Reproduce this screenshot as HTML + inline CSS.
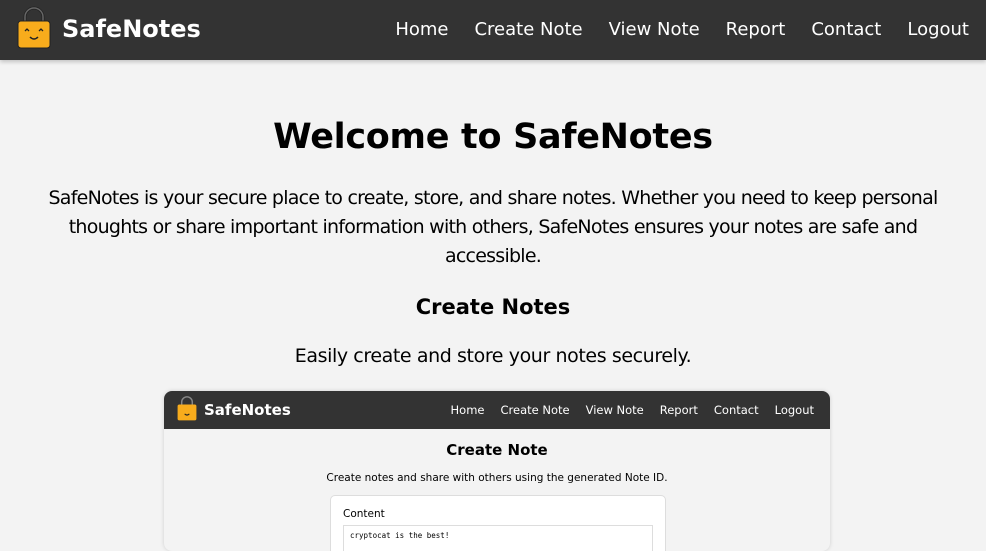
<!DOCTYPE html>
<html><head><meta charset="utf-8"><style>
*{margin:0;padding:0;box-sizing:border-box}
body{width:986px;height:538px;overflow:hidden;background:#f3f3f3;font-family:"DejaVu Sans","Liberation Sans",sans-serif;color:#000}
.nav{height:60px;background:#333;display:flex;align-items:center;position:relative;box-shadow:0 2px 4px rgba(0,0,0,.2)}
.logo{position:absolute;left:17px;top:5px}
.brand{position:absolute;left:62px;top:15px;color:#fff;font-weight:bold;font-size:24px}
.links{position:absolute;right:17px;top:19px;color:#fff;font-size:18px;display:flex;gap:26px}
h1{text-align:center;font-size:35px;font-weight:bold;margin-top:57px;letter-spacing:-0.3px}
p.lead{text-align:center;font-size:19px;line-height:29px;margin:27px 20px 0;letter-spacing:-0.75px}
h2{text-align:center;font-size:21px;font-weight:bold;margin-top:24px}
p.sub{text-align:center;font-size:19px;margin-top:26px;letter-spacing:-0.4px}
.shot{position:absolute;left:164px;top:391px;width:666px;height:160px;background:#f3f3f3;border-radius:8px;overflow:hidden;box-shadow:0 0 4px rgba(0,0,0,.15)}
.snav{height:38px;background:#333;position:relative}
.sbrand{position:absolute;left:40px;top:10px;color:#fff;font-weight:bold;font-size:15px}
.slinks{position:absolute;right:16px;top:12px;color:#fff;font-size:11.5px;display:flex;gap:16px}
.st{text-align:center;font-weight:bold;font-size:15px;margin-top:12px}
.ss{text-align:center;font-size:10.5px;margin-top:13px}
.card{position:absolute;left:166px;top:104px;width:336px;height:80px;background:#fff;border:1px solid #ddd;border-radius:5px}
.card .l{font-size:10.5px;position:absolute;left:12px;top:12px}
.card .i{position:absolute;left:12px;top:29px;width:310px;height:30px;border:1px solid #ddd;font-family:"DejaVu Sans Mono",monospace;font-size:7.5px;padding:5px 6px}
</style></head><body>
<div class="nav">
<svg class="logo" width="34" height="44" viewBox="0 0 34 44"><path d="M8 20V12a9 9 0 0 1 18 0v8" fill="none" stroke="#222" stroke-width="3"/><path d="M8 20V12a9 9 0 0 1 18 0v8" fill="none" stroke="#666" stroke-width="1.5"/><rect x="1" y="16" width="32" height="27" rx="3" fill="#f8ac1c" stroke="#222" stroke-width="1"/><path d="M8 26l2-2 2 2M22 26l2-2 2 2" fill="none" stroke="#222" stroke-width="1.3"/><path d="M13 32q4 4 8 0" fill="none" stroke="#222" stroke-width="1.5"/></svg>
<div class="brand">SafeNotes</div>
<div class="links"><span>Home</span><span>Create Note</span><span>View Note</span><span>Report</span><span>Contact</span><span>Logout</span></div>
</div>
<h1>Welcome to SafeNotes</h1>
<p class="lead">SafeNotes is your secure place to create, store, and share notes. Whether you need to keep personal thoughts or share important information with others, SafeNotes ensures your notes are safe and accessible.</p>
<h2>Create Notes</h2>
<p class="sub">Easily create and store your notes securely.</p>
<div class="shot">
<div class="snav">
<svg style="position:absolute;left:13px;top:3px" width="20" height="28" viewBox="0 0 34 44"><path d="M8 20V12a9 9 0 0 1 18 0v8" fill="none" stroke="#888" stroke-width="2.5"/><rect x="1" y="16" width="32" height="27" rx="3" fill="#f8ac1c"/><path d="M13 32q4 4 8 0" fill="none" stroke="#222" stroke-width="2"/></svg>
<div class="sbrand">SafeNotes</div>
<div class="slinks"><span>Home</span><span>Create Note</span><span>View Note</span><span>Report</span><span>Contact</span><span>Logout</span></div>
</div>
<div class="st">Create Note</div>
<div class="ss">Create notes and share with others using the generated Note ID.</div>
<div class="card"><div class="l">Content</div><div class="i">cryptocat is the best!</div></div>
</div>
</body></html>
